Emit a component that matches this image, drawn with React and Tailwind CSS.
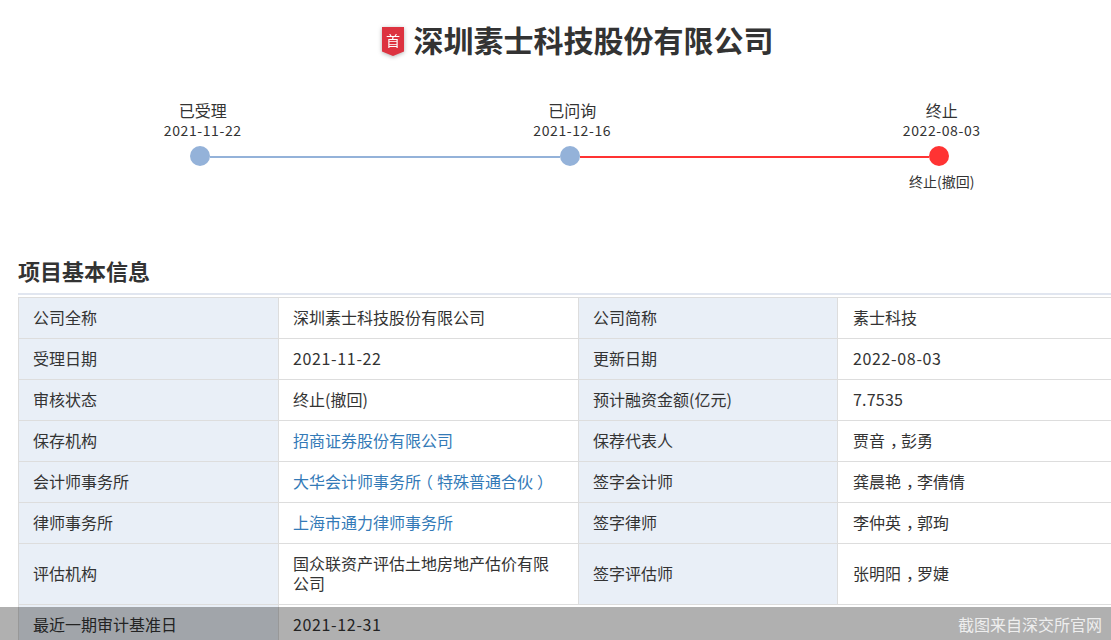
const F = "font-['Microsoft_YaHei','Noto_Sans_CJK_SC','Noto_Sans',sans-serif]";

function Val({ link, span, last, children }) {
  return <td colSpan={span} className={`border border-[#dddddd] pb-[11px] pr-[14px] pt-[9px] align-middle ${last ? "pl-[15px]" : "pl-[14px]"} ${link ? "text-[#337ab7]" : ""}`}>{children}</td>;
}
function Key({ children }) {
  return <td className="border border-[#dddddd] bg-[#e9eff7] pb-[11px] pl-[14px] pr-[14px] pt-[9px] align-middle">{children}</td>;
}
const D = ({ children }) => <span className="tracking-[0.65px]">{children}</span>;
const C = () => <span className="pl-[5px] tracking-[-5px]">，</span>;
const R = () => <span className="pl-[4px] tracking-[-4px]">）</span>;

const rows = [
  ["公司全称", "深圳素士科技股份有限公司", "公司简称", "素士科技"],
  ["受理日期", <D>2021-11-22</D>, "更新日期", <D>2022-08-03</D>],
  ["审核状态", "终止(撤回)", "预计融资金额(亿元)", <span className="tracking-[0.2px]">7.7535</span>],
  ["保存机构", "招商证券股份有限公司", "保荐代表人", <>贾音<C />彭勇</>, true],
  ["会计师事务所", <>大华会计师事务<span className="tracking-[-4px]">所</span><span className="pr-[4px]">（</span>特殊普通合伙<R /></>, "签字会计师", <>龚晨艳<C />李倩倩</>, true],
  ["律师事务所", "上海市通力律师事务所", "签字律师", <>李仲英<C />郭珣</>, true],
  ["评估机构", "国众联资产评估土地房地产估价有限公司", "签字评估师", <>张明阳<C />罗婕</>],
];

function Step({ label, date }) {
  return (
    <div className="flex w-[369.5px] shrink-0 flex-col items-center">
      <div className="text-[16px] leading-[20px]">{label}</div>
      <div className="text-[14px] leading-[20px] tracking-[0.6px]">{date}</div>
    </div>
  );
}

export default function App() {
  return (
    <div className={`relative h-[640px] w-[1111px] overflow-hidden bg-white text-[16px] leading-[20px] text-[#333333] ${F}`}>
      <div className="flex h-[82px] items-center justify-center gap-[10px] pb-[1px] pl-[44px]">
        <svg width="22" height="30" viewBox="0 0 22 30" className="mt-[3px] drop-shadow-[0_1px_2px_rgba(0,0,0,0.3)]">
          <path d="M0 0H22V24.5L11 29L0 24.5Z" fill="#dd3340" />
          <text x="11" y="18.5" textAnchor="middle" fontSize="14" fill="#ffffff">首</text>
        </svg>
        <h1 className="mb-[4px] text-[30px] font-bold leading-[40px] text-[#333333]">深圳素士科技股份有限公司</h1>
      </div>

      <div className="flex pl-[18px] pt-[18px]">
        <Step label="已受理" date="2021-11-22" />
        <Step label="已问询" date="2021-12-16" />
        <Step label="终止" date="2022-08-03" />
      </div>

      <div className="mt-[6px] flex items-center pl-[190px]">
        <div className="h-[20px] w-[20px] shrink-0 rounded-full bg-[#94b2d9]" />
        <div className="mt-[2px] h-[2px] w-[350px] bg-[#94b2d9]" />
        <div className="h-[20px] w-[20px] shrink-0 rounded-full bg-[#94b2d9]" />
        <div className="mt-[2px] h-[2px] w-[349px] bg-[#ff3333]" />
        <div className="h-[20px] w-[20px] shrink-0 rounded-full bg-[#ff3333]" />
      </div>

      <div className="mt-[5px] pl-[909px] text-[14px] leading-[20px]">终止(撤回)</div>

      <div className="ml-[18px] mt-[64px] border-b-2 border-[#e1e6f0] pb-[7px]">
        <h2 className="text-[22px] font-bold leading-[31px] text-[#333333]">项目基本信息</h2>
      </div>

      <table className="ml-[18px] mt-[2px] w-[1320px] table-fixed border-collapse">
        <colgroup>
          <col className="w-[260px]" />
          <col className="w-[300px]" />
          <col className="w-[259px]" />
          <col className="w-[501px]" />
        </colgroup>
        <tbody>
          {rows.map((r) => (
            <tr key={r[0]}>
              <Key>{r[0]}</Key>
              <Val link={r[4]}>{r[1]}</Val>
              <Key>{r[2]}</Key>
              <Val last>{r[3]}</Val>
            </tr>
          ))}
          <tr>
            <Key>最近一期审计基准日</Key>
            <Val span={3}><D>2021-12-31</D></Val>
          </tr>
        </tbody>
      </table>

      <div className="absolute bottom-0 left-0 right-0 flex h-[33px] items-center justify-end bg-black/[0.31] pr-[9px] text-[16px] text-[#eeeeee]">
        截图来自深交所官网
      </div>
    </div>
  );
}
